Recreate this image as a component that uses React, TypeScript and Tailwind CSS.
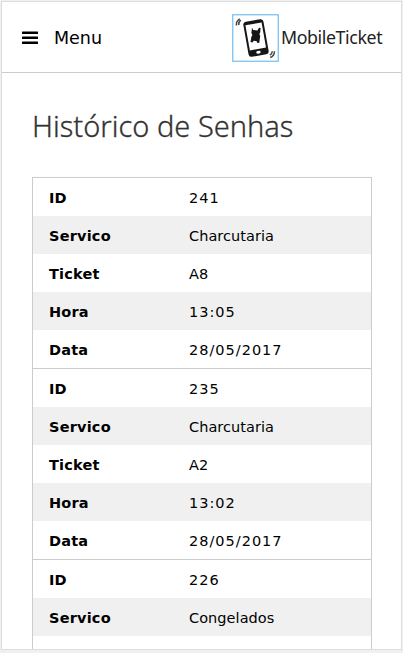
const tickets = [
  [
    ['ID', '241'],
    ['Servico', 'Charcutaria'],
    ['Ticket', 'A8'],
    ['Hora', '13:05'],
    ['Data', '28/05/2017'],
  ],
  [
    ['ID', '235'],
    ['Servico', 'Charcutaria'],
    ['Ticket', 'A2'],
    ['Hora', '13:02'],
    ['Data', '28/05/2017'],
  ],
  [
    ['ID', '226'],
    ['Servico', 'Congelados'],
  ],
];

function Row({ label, value }: { label: string; value: string }) {
  const numeric = /^\d/.test(value);
  return (
    <div className="flex h-[38px] items-center pt-[3px] pl-4 text-[14.5px] even:bg-[#f0f0f0]">
      <dt className="w-[140px] font-bold tracking-[0.2px]">{label}</dt>
      <dd className={numeric ? 'tracking-[1px]' : 'tracking-[0.05px]'}>{value}</dd>
    </div>
  );
}

function Logo() {
  return (
    <div className="flex items-center pt-px">
      <svg width="47" height="48" viewBox="0 0 47 48" fill="none">
        <rect x="0.75" y="0.75" width="45.5" height="46.5" stroke="#70bdf2" strokeWidth="1.2" />
        <g transform="rotate(-10 24 24)">
          <rect x="13.8" y="6.2" width="20.4" height="35.6" rx="3" fill="#161616" />
          <rect x="15.8" y="9.6" width="16.4" height="25.6" fill="#fff" />
          <rect x="21.8" y="37" width="4.4" height="2.8" rx="1.4" fill="#fff" />
        </g>
        <path d="M20 13.8l1.2 2.2 4.2.4 1.6-2.6 1.6.3-.4 4.4-.9 1.6.9 1.8-.9 6.8-1.9.2-.7-1.7-3-.5-1.3 1.8-1.9-.5.9-5.3 1-1.7-1-1.9z" fill="#161616" />
        <path d="M4.5 11.5c-.4-3 .7-5.2 3.3-6.7M6.8 11c-.2-2.2.5-3.7 2-4.8M38.2 43.5c2.7-1 4.2-3.2 4.3-6.3M37.8 41.1c1.6-.7 2.4-1.9 2.5-3.8" stroke="#444" strokeWidth="1.5" />
      </svg>
      <span className="ml-0.5 w-[103px] pb-px text-[17.8px] leading-[24px] tracking-[-0.4px] text-[#222] font-['Noto_Sans',sans-serif]">
        MobileTicket
      </span>
    </div>
  );
}

export default function App() {
  return (
    <div className="h-[653px] w-[403px] overflow-hidden bg-[#f0f0f0] px-px pt-px font-['DejaVu_Sans',sans-serif] text-black">
      <main className="flex h-[649px] flex-col overflow-hidden border border-[#ddd] bg-white">
        <header className="flex h-[71px] shrink-0 items-center justify-between border-b border-[#ccc] pr-[17px] pl-5">
          <button className="flex items-center gap-4 pt-px">
            <svg width="16" height="14" viewBox="0 0 16 14" fill="#000">
              <rect y="0.6" width="16" height="2.5" rx="0.5" />
              <rect y="5.6" width="16" height="2.5" rx="0.5" />
              <rect y="10.6" width="16" height="2.5" rx="0.5" />
            </svg>
            <span className="text-[17.5px] leading-6">Menu</span>
          </button>
          <Logo />
        </header>
        <h1 className="mt-[33px] ml-[30px] text-[29px] leading-[40px] font-light whitespace-nowrap text-[#333] font-['Noto_Sans',sans-serif] [-webkit-text-stroke:0.3px_#333]">
          Histórico de Senhas
        </h1>
        <div className="mt-[31px] mr-[29px] ml-[30px] flex-1 border-x border-[#ccc]">
          {tickets.map((rows, i) => (
            <dl key={i} className="border-t border-[#ccc]">
              {rows.map(([label, value]) => (
                <Row key={label} label={label} value={value} />
              ))}
            </dl>
          ))}
        </div>
      </main>
    </div>
  );
}
